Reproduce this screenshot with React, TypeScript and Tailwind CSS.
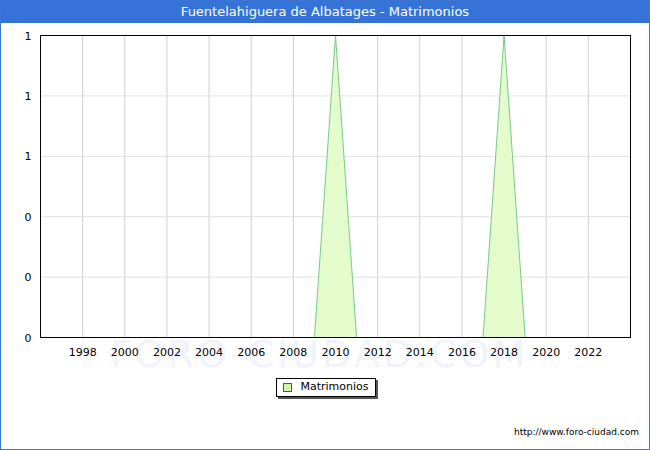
export default function App() {
  const x = (yr: number) => ((yr - 1996) / 28) * 590;
  const years = [];
  for (let y = 1998; y <= 2022; y += 2) years.push(y);
  const hy = [0, 60.4, 120.8, 181.2, 241.6, 302];
  const ylabels = ["1", "1", "1", "0", "0", "0"];
  return (
    <div className="w-[650px] h-[450px] bg-white border border-[#3a75d6] flex flex-col" style={{ fontFamily: '"DejaVu Sans", sans-serif' }}>
      <div className="h-[22px] bg-[#3573d8] text-white text-[13px] flex items-center justify-center shrink-0">Fuentelahiguera de Albatages - Matrimonios</div>
      <div className="relative h-[350px] shrink-0">
        <svg width="648" height="350" className="absolute left-0 top-0">
          <text x="318" y="344" textAnchor="middle" fontSize="38" fill="#f1f3fb" fontFamily="DejaVu Sans" letterSpacing="3">FORO-CIUDAD.COM</text>
          <g transform="translate(39.5,12.5)">
            {years.map((y) => (
              <line key={y} x1={x(y)} x2={x(y)} y1={0} y2={302} stroke="#d0d0d0" />
            ))}
            {hy.map((h, i) => (
              <line key={i} x1={0} x2={590} y1={h} y2={h} stroke="#e2e2e2" />
            ))}
            {[2010, 2018].map((p) => (
              <polygon key={p} points={`${x(p - 1)},302 ${x(p)},0 ${x(p + 1)},302`} fill="#e4fccc" stroke="#77c98e" strokeWidth="1" />
            ))}
            <rect x={0} y={0} width={590} height={302} fill="none" stroke="#000" />
            {hy.map((h, i) => (
              <text key={i} x={-9} y={h + 4} textAnchor="end" fontSize="11" fill="#000">{ylabels[i]}</text>
            ))}
            {years.map((y) => (
              <text key={y} x={x(y)} y={320} textAnchor="middle" fontSize="11" fill="#000">{y}</text>
            ))}
          </g>
        </svg>
      </div>
      <div className="flex justify-center h-[40px] pt-[5px] shrink-0">
        <div className="h-[19px] ml-[2px] border border-black shadow-[2px_2px_0_#555] bg-white flex items-center px-[6px] gap-[8px] text-[11px]">
          <span className="w-[9px] h-[9px] bg-[#ccf5a8] border border-[#555]" />
          <span>Matrimonios</span>
        </div>
      </div>
      <div className="flex-1 flex items-end justify-end pr-[10px] pb-[10px] text-[9px]">http://www.foro-ciudad.com</div>
    </div>
  );
}
